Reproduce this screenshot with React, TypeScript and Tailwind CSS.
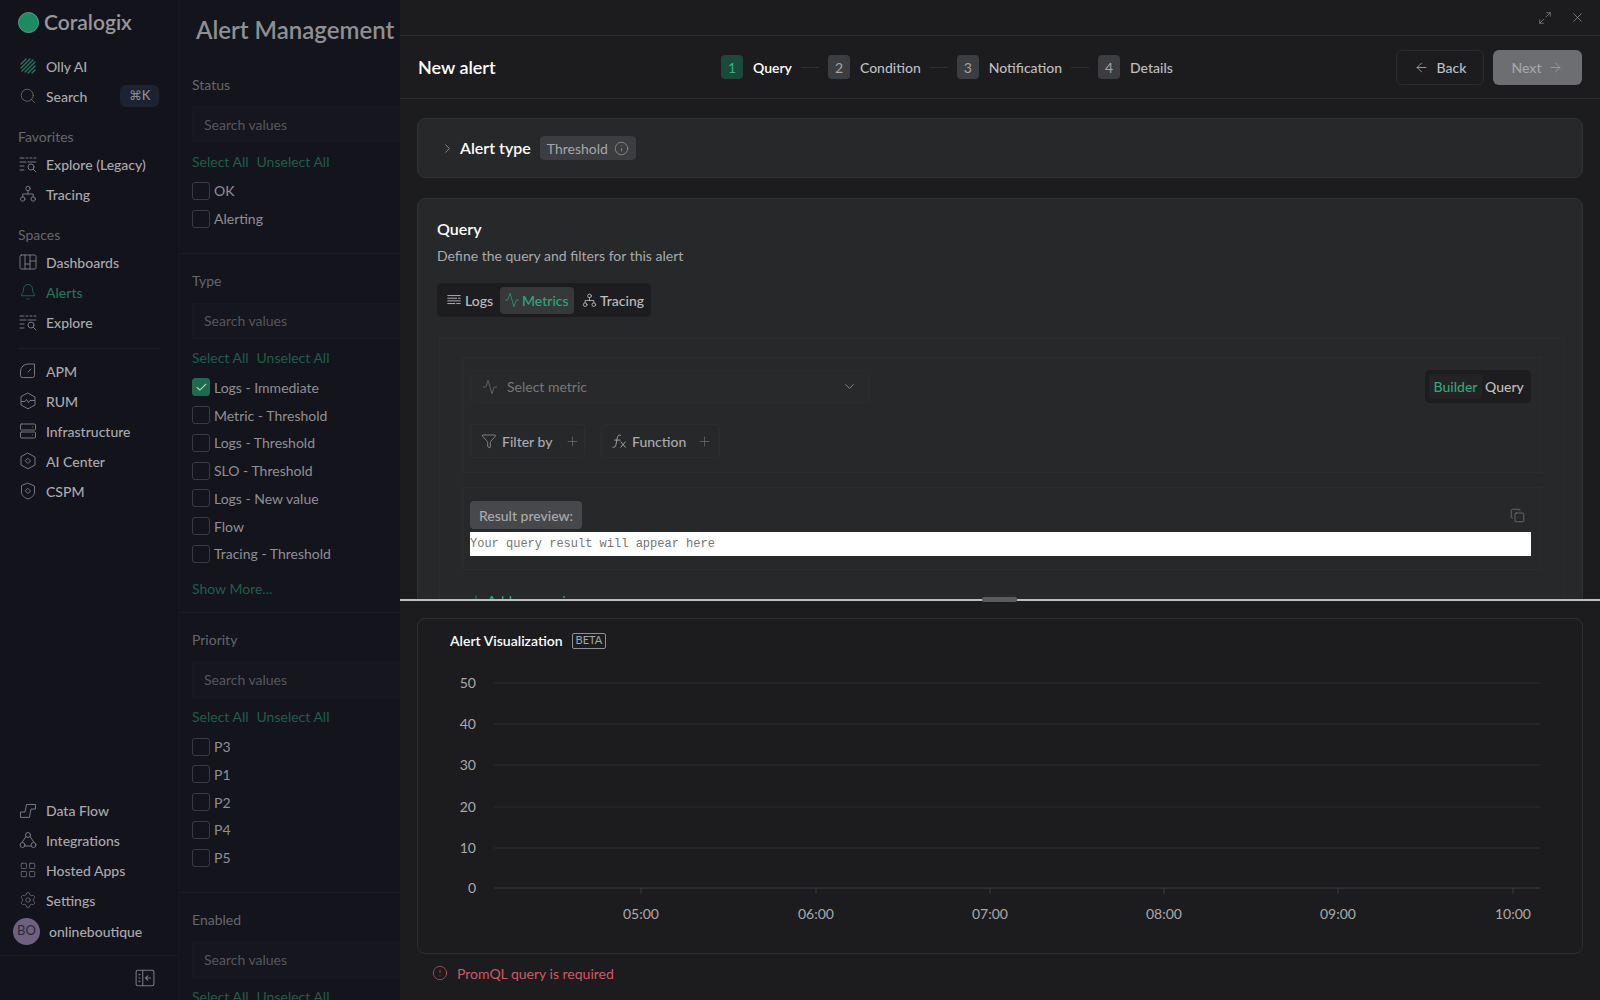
import React from 'react';
import { ArrowLeft, ArrowRight, Bell, Check, ChevronDown, ChevronRight, Copy, Funnel, Info, LayoutGrid, Maximize2, Plus, Search, Settings, X, Activity, CircleAlert } from 'lucide-react';

type P = { className?: string };
const S = ({ children, className = 'w-[18px] h-[18px]' }: { children: React.ReactNode; className?: string }) => (
  <svg viewBox="0 0 18 18" fill="none" stroke="currentColor" strokeWidth={1} strokeLinecap="round" strokeLinejoin="round" className={className}>{children}</svg>
);
const ExploreIcon = (p: P) => <S {...p}><path d="M1 3h4M7 3h2M11 3h2M15 3h2M1 7h6M1 11h4M1 15h4" /><path d="M9 7h8" /><circle cx="12" cy="12" r="3" /><path d="M14.2 14.2 17 17" /></S>;
const TracingIcon = (p: P) => <S {...p}><circle cx="9" cy="3.5" r="2.2" /><circle cx="3.8" cy="14" r="2.2" /><circle cx="14.2" cy="14" r="2.2" /><path d="M9 5.7V9M3.8 11.8V9h10.4v2.8" /></S>;
const DashIcon = (p: P) => <S {...p}><rect x="1" y="2" width="16" height="14" rx="1.5" /><path d="M6 2v14M11 2v14M11 8h6M6 11h5M1 6" /></S>;
const GaugeIcon = (p: P) => <S {...p}><path d="M4 15.5H3a2 2 0 0 1-1.5-2V9A7.5 7.5 0 0 1 9 2h6.5v11.5a2 2 0 0 1-1.5 2z" /><path d="m9 10 3-3" /></S>;
const HexPulse = (p: P) => <S {...p}><path d="M9 1.2 16 5v8l-7 3.8L2 13V5z" /><path d="M2.5 9.5h3.5l1.5-2 2 3 1.5-2h4.5" /></S>;
const ServerIcon = (p: P) => <S {...p}><rect x="1.5" y="2" width="15" height="6" rx="1" /><rect x="1.5" y="10" width="15" height="6" rx="1" /><path d="M13.5 5h.01M13.5 13h.01" /></S>;
const HexDiamond = (p: P) => <S {...p}><path d="M9 1.2 16 5v8l-7 3.8L2 13V5z" /><path d="M9 6.5 11.5 9 9 11.5 6.5 9z" /></S>;
const ShieldDiamond = (p: P) => <S {...p}><path d="M9 1.2 15.5 4v6c0 3.5-3 5.8-6.5 7-3.5-1.2-6.5-3.500-6.500-7V4z" /><path d="M9 6.500 11.500 9 9 11.500 6.500 9z" /></S>;
const FlowIcon = (p: P) => <S {...p}><path d="M1.500 16v-5H6l1.500-7.500H16.500V8H12l-1.500 8z" /></S>;
const IntegrIcon = (p: P) => <S {...p}><circle cx="9" cy="4" r="2.500" /><circle cx="3.500" cy="14" r="2.500" /><circle cx="14.500" cy="14" r="2.500" /><path d="M7 5.500 3 11.500M11 5.500l4 6M6 15h6" /></S>;
const OllyIcon = (p: P) => <S {...p}><path d="M2 7 7 2M2 11l9-9M3 14 14 3M6 15 16 5M9 16l7-7M13 16l3-3" strokeWidth={1.500} /></S>;
const PanelIcon = (p: P) => <S {...p}><rect x="1" y="2" width="16" height="14" rx="1.500" /><path d="M7 2v14M3.500 6h1M3.500 9h1M3.500 12h1M14 9h-4.500M11.500 7l-2 2 2 2" /></S>;
const LogsIcon = (p: P) => <S {...p}><path d="M2 4h14M2 7h10M14 7h2M2 10h14M2 13h8M12 13h4" /></S>;
const FxIcon = (p: P) => <S {...p}><path d="M1 16c2 .5 3-.5 3.500-3l1.500-8c.4-2 1.500-3 3.500-2.500M3 8h6M10 10l5 6M15 10l-5 6" /></S>;

const Logo = () => <span className="w-[21px] h-[21px] rounded-full bg-[#1c8a63] border border-[#5f9c88] shrink-0" />;

const Item = ({ icon: I, label, active }: { icon: React.ComponentType<P>; label: string; active?: boolean }) => (
  <div className={`h-[30px] flex items-center pl-[19px] gap-[9px] text-[14px] font-medium ${active ? 'text-[#1f7558]' : 'text-[#a9aaad]'}`}>
    <span className={`shrink-0 ${active ? 'text-[#1f7558]' : 'text-[#77787c]'}`}><I className="w-[18px] h-[18px]" /></span>
    <span className="whitespace-nowrap">{label}</span>
  </div>
);
const Lucide = (C: React.ComponentType<{ className?: string; strokeWidth?: number }>) => (p: P) => <C className={p.className} strokeWidth={1} />;

const Sidebar = () => (
  <aside className="w-[178px] shrink-0 h-full bg-[#13131b] flex flex-col justify-between">
    <div>
      <div className="h-[44px] flex items-center pl-[18px] gap-[5px]">
        <Logo />
        <span className="text-[21px] font-semibold text-[#97989c]">Coralogix</span>
      </div>
      <div className="mt-[7px]">
        <div className="h-[30px] flex items-center pl-[19px] gap-[9px] text-[14px] font-medium text-[#a9aaad]"><span className="text-[#1f7558]"><OllyIcon className="w-[18px] h-[18px]" /></span>Olly AI</div>
        <div className="h-[30px] flex items-center pl-[19px] pr-[19px] text-[14px] font-medium text-[#a9aaad]">
          <span className="text-[#77787c] mr-[9px]"><Search className="w-[18px] h-[18px]" strokeWidth={1} /></span>
          <span className="flex-1">Search</span>
          <span className="h-[22px] w-[39px] rounded-[6px] bg-[#1d2230] flex items-center justify-center text-[13px] text-[#8b8c90]">⌘K</span>
        </div>
      </div>
      <div className="mt-[15px] h-[20px] pl-[18px] flex items-center text-[14px] text-[#66676b]">Favorites</div>
      <div className="mt-[3px]">
        <Item icon={ExploreIcon} label="Explore (Legacy)" />
        <Item icon={TracingIcon} label="Tracing" />
      </div>
      <div className="mt-[15px] h-[20px] pl-[18px] flex items-center text-[14px] text-[#66676b]">Spaces</div>
      <div className="mt-[3px]">
        <Item icon={DashIcon} label="Dashboards" />
        <Item icon={Lucide(Bell)} label="Alerts" active />
        <Item icon={ExploreIcon} label="Explore" />
      </div>
      <div className="mt-[11px] mx-[18px] border-t border-[#1d1d26]" />
      <div className="mt-[7px]">
        <Item icon={GaugeIcon} label="APM" />
        <Item icon={HexPulse} label="RUM" />
        <Item icon={ServerIcon} label="Infrastructure" />
        <Item icon={HexDiamond} label="AI Center" />
        <Item icon={ShieldDiamond} label="CSPM" />
      </div>
    </div>
    <div>
      <Item icon={FlowIcon} label="Data Flow" />
      <Item icon={IntegrIcon} label="Integrations" />
      <Item icon={Lucide(LayoutGrid)} label="Hosted Apps" />
      <Item icon={Lucide(Settings)} label="Settings" />
      <div className="mt-px h-[30px] flex items-center pl-[13px] gap-[9px]">
        <span className="w-[27px] h-[27px] rounded-full bg-[#6e6180] flex items-center justify-center text-[13px] text-[#2a2733]">BO</span>
        <span className="text-[14px] font-medium text-[#a9aaad]">onlineboutique</span>
      </div>
      <div className="mt-[9px] border-t border-[#1a1a22] h-[45px] flex items-center justify-end pr-[23px] text-[#77787c]">
        <PanelIcon className="w-[20px] h-[20px]" />
      </div>
    </div>
  </aside>
);

const Row = ({ label, checked }: { label: string; checked?: boolean }) => (
  <div className="h-[27.75px] flex items-center gap-[4px] text-[14px] text-[#8f9094] whitespace-nowrap">
    <span className={`w-[18px] h-[18px] rounded-[3px] border flex items-center justify-center ${checked ? 'bg-[#1d6a4f] border-[#1d6a4f]' : 'border-[#3a3b42]'}`}>
      {checked && <Check className="w-[13px] h-[13px] text-[#b9c9c2]" strokeWidth={2} />}
    </span>
    {label}
  </div>
);
const Group = ({ title, rows, more, checked, top = 'pt-[17px]', bottom = 'pb-[20px]', border = true }: { title: string; rows: string[]; more?: boolean; checked?: string; top?: string; bottom?: string; border?: boolean }) => (
  <section className={`${top} ${bottom} ${border ? 'border-b border-[#1b1b23]' : ''} pl-[13px]`}>
    <div className="h-[20px] flex items-center text-[14px] text-[#66676b]">{title}</div>
    <div className="mt-[12px] h-[36px] bg-[#16161f] border border-[#181821] flex items-center pl-[11px] text-[14px] text-[#55565b] -mr-[20px]">Search values</div>
    <div className="mt-[9px] h-[20px] flex items-center gap-[8px] text-[14px] text-[#1d5f49] whitespace-nowrap"><span>Select All</span><span>Unselect All</span></div>
    {rows.length > 0 && <div className="mt-[6px]">{rows.map(r => <Row key={r} label={r} checked={r === checked} />)}</div>}
    {more && <div className="mt-[11px] h-[20px] flex items-center text-[14px] text-[#1d5f49]">Show More...</div>}
  </section>
);
const Filters = () => (
  <div className="w-[222px] shrink-0 h-full bg-[#14141c] overflow-hidden border-l border-[#17171f]">
    <div className="h-[60px] flex items-center pl-[17px] text-[24px] font-semibold text-[#8e8f93] whitespace-nowrap">Alert Management</div>
    <Group title="Status" rows={['OK', 'Alerting']} top="pt-[14px]" />
    <Group title="Type" rows={['Logs - Immediate', 'Metric - Threshold', 'Logs - Threshold', 'SLO - Threshold', 'Logs - New value', 'Flow', 'Tracing - Threshold']} checked="Logs - Immediate" more bottom="pb-[13px]" />
    <Group title="Priority" rows={['P3', 'P1', 'P2', 'P4', 'P5']} />
    <Group title="Enabled" rows={[]} border={false} />
  </div>
);

const Step = ({ n, label, active }: { n: number; label: string; active?: boolean }) => (
  <div className="flex items-center gap-[10px]">
    <span className={`w-[22px] h-[24px] rounded-[4px] flex items-center justify-center text-[14px] ${active ? 'bg-[#1c4a3a] text-[#36b184]' : 'bg-[#3b3d40] text-[#a3a4a7]'}`}>{n}</span>
    <span className={`text-[14px] ${active ? 'text-white font-semibold' : 'text-[#bdbec0] font-medium'}`}>{label}</span>
  </div>
);
const Conn = () => <span className="w-[18px] mx-[9px] border-t border-[#2d2e30]" />;

const Drawer = () => (
  <main className="flex-1 min-w-0 h-full bg-[#1c1c1e] flex flex-col">
    <div className="h-[599px] overflow-hidden shrink-0">
      <div className="h-[36px] border-b border-[#2a2a2c] flex items-center justify-end gap-[18px] pr-[15px] text-[#a5a6a8]">
        <Maximize2 className="w-[14px] h-[14px]" strokeWidth={1} />
        <X className="w-[15px] h-[15px]" strokeWidth={1} />
      </div>
      <div className="h-[63px] border-b border-[#2a2a2c] flex items-center pl-[18px] pr-[18px]">
        <h1 className="w-[303px] text-[18px] font-semibold text-white">New alert</h1>
        <div className="flex items-center">
          <Step n={1} label="Query" active /><Conn />
          <Step n={2} label="Condition" /><Conn />
          <Step n={3} label="Notification" /><Conn />
          <Step n={4} label="Details" />
        </div>
        <div className="ml-auto flex items-center gap-[9px]">
          <button className="w-[88px] h-[35px] rounded-[6px] border border-[#2a2a2c] flex items-center justify-center gap-[8px] text-[14px] font-medium text-[#bdbec0]"><ArrowLeft className="w-[15px] h-[15px]" strokeWidth={1.2} />Back</button>
          <button className="w-[89px] h-[35px] rounded-[6px] bg-[#6d6e72] flex items-center justify-center gap-[7px] text-[14px] font-medium text-[#a5a6a9]">Next<ArrowRight className="w-[15px] h-[15px]" strokeWidth={1.2} /></button>
        </div>
      </div>
      <div className="px-[17px] pt-[19px]">
        <div className="h-[60px] rounded-[8px] bg-[#27282a] border border-[#2f3032] flex items-center pl-[22px] gap-[5px]">
          <ChevronRight className="w-[15px] h-[15px] text-[#a5a6a8]" strokeWidth={1.2} />
          <span className="text-[16px] font-semibold text-white">Alert type</span>
          <span className="ml-[4px] h-[24px] px-[7px] rounded-[4px] bg-[#3b3d40] flex items-center gap-[6px] text-[14px] text-[#a5a6a9]">Threshold<Info className="w-[15px] h-[15px]" strokeWidth={1} /></span>
        </div>
        <div className="mt-[20px] rounded-[8px] bg-[#27282a] border border-[#2f3032] pl-[19px] pr-[18px] pt-[19px]">
          <div className="h-[22px] flex items-center text-[16px] font-semibold text-white">Query</div>
          <div className="mt-[5px] h-[20px] flex items-center text-[14px] text-[#a9aaad]">Define the query and filters for this alert</div>
          <div className="mt-[18px] w-[214px] h-[34px] rounded-[5px] bg-[#1d1d1f] flex items-center pl-[5px] text-[14px] font-medium text-[#bdbec0]">
            <span className="flex items-center gap-[3px] w-[58px] pl-[4px]"><LogsIcon className="w-[16px] h-[16px]" />Logs</span>
            <span className="flex items-center gap-[2px] w-[74px] h-[27px] rounded-[4px] bg-[#37383a] text-[#2ea67a] pl-[4px]"><Activity className="w-[16px] h-[16px]" strokeWidth={1} />Metrics</span>
            <span className="flex items-center gap-[3px] pl-[8px]"><TracingIcon className="w-[15px] h-[15px]" />Tracing</span>
          </div>
          <div className="mt-[21px] ml-[2px] mr-0 border border-[#2b2c2e] pl-[22px] pr-[22px] pt-[18px] pb-[20px]">
            <div className="border border-[#2b2c2e] pl-[7px] pr-[9px] pt-[12px] pb-[14px]">
              <div className="flex justify-between">
                <div className="w-[400px] h-[33px] rounded-[4px] bg-[#28292b] border border-[#2a2b2d] flex items-center pl-[11px] pr-[12px] text-[14px] text-[#77787b]">
                  <Activity className="w-[16px] h-[16px] mr-[9px]" strokeWidth={1} /><span className="flex-1">Select metric</span>
                  <ChevronDown className="w-[15px] h-[15px] text-[#a5a6a8]" strokeWidth={1.2} />
                </div>
                <div className="h-[33px] w-[106px] rounded-[5px] bg-[#1d1d1f] flex items-center text-[14px] font-medium p-[4px]">
                  <span className="h-[25px] w-[53px] rounded-[3px] bg-[#232325] text-[#2ea67a] flex items-center justify-center">Builder</span>
                  <span className="flex-1 text-[#bdbec0] text-center">Query</span>
                </div>
              </div>
              <div className="mt-[21px] flex gap-[16px]">
                <div className="w-[115px] h-[34px] rounded-[4px] border border-[#2c2d2f] flex items-center pl-[10px] gap-[5px] text-[14px] font-medium text-[#a9aaad]">
                  <Funnel className="w-[16px] h-[16px]" strokeWidth={1} /><span>Filter by</span><Plus className="ml-[8px] w-[15px] h-[15px] text-[#77787b]" strokeWidth={1} />
                </div>
                <div className="w-[119px] h-[34px] rounded-[4px] border border-[#2c2d2f] flex items-center pl-[10px] gap-[4px] text-[14px] font-medium text-[#a9aaad]">
                  <FxIcon className="w-[16px] h-[16px]" /><span>Function</span><Plus className="ml-[7px] w-[15px] h-[15px] text-[#77787b]" strokeWidth={1} />
                </div>
              </div>
            </div>
            <div className="mt-[14px] border border-[#2b2c2e] pl-[7px] pr-[9px] pt-[13px] pb-[13px]">
              <div className="flex items-center justify-between">
                <span className="h-[28px] w-[112px] rounded-[4px] bg-[#46484b] flex items-center justify-center text-[14px] font-medium text-[#a9aaad]">Result preview:</span>
                <Copy className="w-[15px] h-[15px] text-[#8a8b8e] mr-[6px]" strokeWidth={1} />
              </div>
              <div className="mt-[3px] h-[24px] bg-white flex items-center text-[12px] text-[#757575] font-['Liberation_Mono',monospace]">Your query result will appear here</div>
            </div>
            <div className="mt-[20px] h-[20px] flex items-center gap-[4px] pl-[7px] text-[14px] font-medium text-[#2ea67a]"><Plus className="w-[14px] h-[14px]" strokeWidth={1.2} />Add expression</div>
          </div>
        </div>
      </div>
    </div>
    <div className="relative h-[2px] bg-[#bcbdbe] shrink-0">
      <span className="absolute left-[582px] -top-[2px] w-[35px] h-[5px] rounded-[2px] bg-[#5b5c5e]" />
    </div>
    <div className="flex-1 px-[17px] pt-[17px] min-h-0">
      <div className="h-[336px] rounded-[8px] border border-[#2d2e30]">
        <div className="h-[43px] flex items-center pl-[32px] gap-[9px]">
          <span className="text-[14px] font-semibold text-white">Alert Visualization</span>
          <span className="h-[16px] px-[3px] rounded-[2px] border border-[#8f9092] flex items-center text-[11px] text-[#a5a6a8]">BETA</span>
        </div>
        <svg viewBox="0 0 1164 290" className="block w-[1164px] h-[290px]">
          {[['50', 21], ['40', 62], ['30', 103], ['20', 145], ['10', 186], ['0', 226]].map(([t, y]) => (
            <g key={t as string}>
              <line x1={76} x2={1122} y1={y as number} y2={y as number} stroke={t === '0' ? '#3a3b3d' : '#2c2d2f'} />
              <text x={58} y={(y as number) + 5} textAnchor="end" fontSize={14} fill="#a9aaac">{t}</text>
            </g>
          ))}
          {[['05:00', 223], ['06:00', 398], ['07:00', 572], ['08:00', 746], ['09:00', 920], ['10:00', 1095]].map(([t, x]) => (
            <g key={t as string}>
              <line x1={x as number} x2={x as number} y1={226} y2={232} stroke="#3a3b3d" />
              <text x={x as number} y={257} textAnchor="middle" fontSize={14} fill="#a9aaac">{t}</text>
            </g>
          ))}
        </svg>
      </div>
      <div className="mt-[9px] h-[20px] pl-[15px] flex items-center gap-[9px] text-[14px] text-[#d25766]">
        <CircleAlert className="w-[16px] h-[16px]" strokeWidth={1} />PromQL query is required
      </div>
    </div>
  </main>
);

export default function App() {
  return (
    <div className="w-[1600px] h-screen flex overflow-hidden font-['Lato','Noto_Sans',sans-serif]">
      <Sidebar />
      <Filters />
      <Drawer />
    </div>
  );
}
